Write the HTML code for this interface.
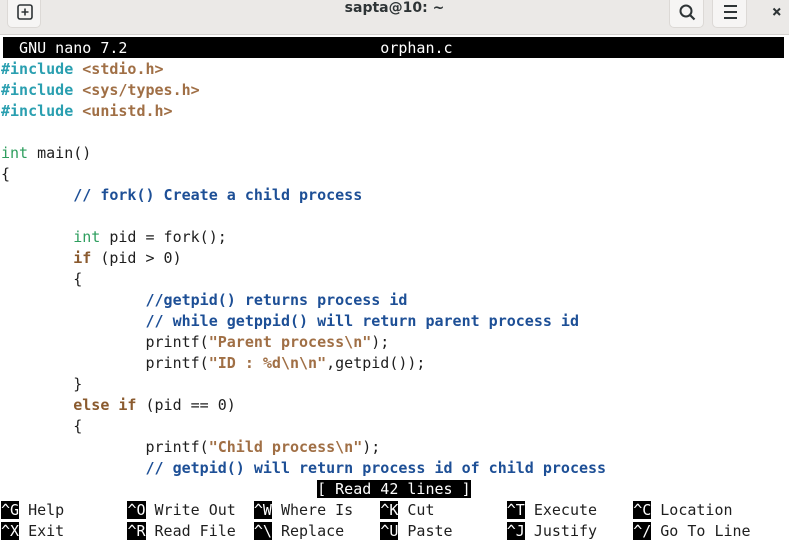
<!DOCTYPE html>
<html><head><meta charset="utf-8"><style>
body{margin:0;width:789px;height:536px;overflow:hidden;background:#fff;position:relative;font-family:"DejaVu Sans Mono","Liberation Mono",monospace;}
.tb{position:absolute;left:0;top:0;width:789px;height:34px;background:#ebe9e7;border-bottom:1px solid #d4d1ce;}
.btn{position:absolute;top:0;height:28px;background:#f6f5f4;border:1px solid #dcd9d6;border-top:none;border-radius:0 0 5px 5px;box-sizing:border-box;}
.title{position:absolute;top:0;left:0;width:789px;text-align:center;line-height:24px;font:bold 14px "DejaVu Sans","Liberation Sans",sans-serif;color:#2e3436;}
.r{position:absolute;left:1px;height:21px;line-height:21px;font-size:15px;white-space:pre;color:#1e1e1e;}
.pp{color:#2a9fb0;font-weight:bold}.s{color:#a06f45;font-weight:bold}.c{color:#1d4f96;font-weight:bold}.k{color:#2e9e5e}.b{color:#8a5a2e;font-weight:bold}
.inv{background:#000;color:#fff}
</style></head><body>
<div class="tb">
 <div class="btn" style="left:7px;width:34px"><svg width="34" height="28" viewBox="0 0 34 28"><rect x="10" y="5" width="14" height="14" rx="2" fill="none" stroke="#2e3436" stroke-width="1.6"/><path d="M17 8.5v7M13.5 12h7" stroke="#2e3436" stroke-width="1.6"/></svg></div>
 <div class="title">sapta@10: ~</div>
 <div class="btn" style="left:669px;width:35px"><svg width="35" height="28" viewBox="0 0 35 28"><circle cx="16" cy="11" r="5.5" fill="none" stroke="#2e3436" stroke-width="2"/><path d="M20 15l4.5 4.5" stroke="#2e3436" stroke-width="2.2"/></svg></div>
 <div class="btn" style="left:712px;width:35px"><svg width="35" height="28" viewBox="0 0 35 28"><path d="M11 6h13M11 12h13M11 18h13" stroke="#2e3436" stroke-width="2"/></svg></div>
 <svg style="position:absolute;left:771px;top:6px" width="12" height="12" viewBox="0 0 12 12"><path d="M2.5 2.5l6.5 6.5M9 2.5l-6.5 6.5" stroke="#2e3436" stroke-width="2"/></svg>
</div>
<div style="position:absolute;left:3px;top:37px;width:781px;height:21px;background:#000"></div>
<div class="r" style="top:38px;color:#fff">  GNU nano 7.2                            orphan.c</div>
<div class="r" style="top:59px"><span class="pp">#include</span> <span class="s">&lt;stdio.h&gt;</span></div>
<div class="r" style="top:80px"><span class="pp">#include</span> <span class="s">&lt;sys/types.h&gt;</span></div>
<div class="r" style="top:101px"><span class="pp">#include</span> <span class="s">&lt;unistd.h&gt;</span></div>
<div class="r" style="top:143px"><span class="k">int</span> main()</div>
<div class="r" style="top:164px">{</div>
<div class="r" style="top:185px">        <span class="c">// fork() Create a child process</span></div>
<div class="r" style="top:227px">        <span class="k">int</span> pid = fork();</div>
<div class="r" style="top:248px">        <span class="b">if</span> (pid &gt; 0)</div>
<div class="r" style="top:269px">        {</div>
<div class="r" style="top:290px">                <span class="c">//getpid() returns process id</span></div>
<div class="r" style="top:311px">                <span class="c">// while getppid() will return parent process id</span></div>
<div class="r" style="top:332px">                printf(<span class="s">"Parent process\n"</span>);</div>
<div class="r" style="top:353px">                printf(<span class="s">"ID : %d\n\n"</span>,getpid());</div>
<div class="r" style="top:374px">        }</div>
<div class="r" style="top:395px">        <span class="b">else if</span> (pid == 0)</div>
<div class="r" style="top:416px">        {</div>
<div class="r" style="top:437px">                printf(<span class="s">"Child process\n"</span>);</div>
<div class="r" style="top:458px">                <span class="c">// getpid() will return process id of child process</span></div>
<div class="r" style="top:479px">                                   <span class="inv">[ Read 42 lines ]</span></div>
<div class="r" style="top:500px"><span class="inv">^G</span> Help       <span class="inv">^O</span> Write Out  <span class="inv">^W</span> Where Is   <span class="inv">^K</span> Cut        <span class="inv">^T</span> Execute    <span class="inv">^C</span> Location</div>
<div class="r" style="top:521px"><span class="inv">^X</span> Exit       <span class="inv">^R</span> Read File  <span class="inv">^\</span> Replace    <span class="inv">^U</span> Paste      <span class="inv">^J</span> Justify    <span class="inv">^/</span> Go To Line</div>
</body></html>
